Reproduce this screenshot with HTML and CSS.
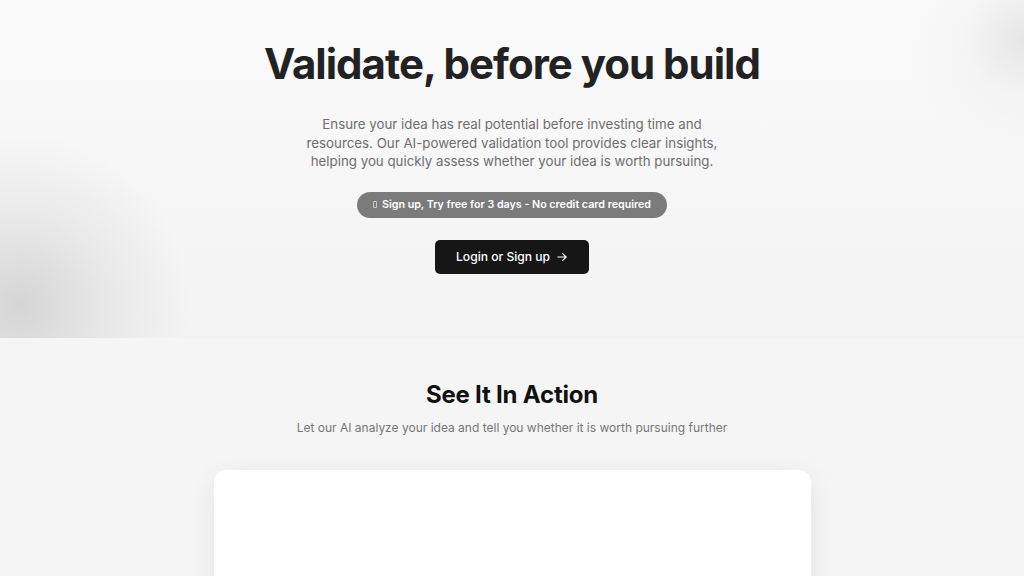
FILE: index.html
```html
<!DOCTYPE html>
<html lang="en">
<head>
<meta charset="utf-8">
<title>Validate, before you build</title>
<link rel="stylesheet" href="styles.css">
</head>
<body>
<section class="hero">
  <h1 class="hero-title">Validate, before you build</h1>
  <p class="hero-text">Ensure your idea has real potential before investing time and resources. Our AI-powered validation tool provides clear insights, helping you quickly assess whether your idea is worth pursuing.</p>
  <div class="badge"><span class="tofu"></span>Sign up, Try free for 3 days - No credit card required</div>
  <a class="cta" href="#">Login or Sign up
    <svg class="arrow" viewBox="0 0 16 16" width="12" height="12" fill="none" stroke="currentColor" stroke-width="1.6" stroke-linecap="round" stroke-linejoin="round"><path d="M2.5 8h11M9 3.5 13.5 8 9 12.5"/></svg>
  </a>
</section>
<section class="action">
  <h2 class="action-title">See It In Action</h2>
  <p class="action-text">Let our AI analyze your idea and tell you whether it is worth pursuing further</p>
  <div class="demo-card"></div>
</section>
</body>
</html>
```

FILE: styles.css
```css
* { box-sizing: border-box; }
html, body { margin: 0; padding: 0; }
body {
  font-family: Inter, "Noto Sans", "Liberation Sans", sans-serif;
  background: #f5f5f5;
  color: #222;
  overflow: hidden;
  height: 576px;
}
.hero {
  height: 338px;
  padding-top: 40px;
  display: flex;
  flex-direction: column;
  align-items: center;
  background:
    radial-gradient(circle at 20px 305px, rgba(205,205,205,0.8) 0, rgba(215,215,215,0.4) 90px, rgba(240,240,240,0) 170px),
    radial-gradient(circle at 100% 40px, rgba(225,225,225,0.8) 0, rgba(235,235,235,0.3) 60px, rgba(245,245,245,0) 120px),
    linear-gradient(#fafafa, #f3f3f3);
}
.hero-title {
  margin: 0;
  font-size: 42px;
  line-height: 48px;
  font-weight: 700;
  letter-spacing: -1px;
  color: #222;
}
.hero-text {
  margin: 27px 0 0;
  width: 420px;
  text-align: center;
  font-size: 13.3px;
  line-height: 18.5px;
  color: #6e6e6e;
}
.badge {
  margin-top: 21px;
  height: 26px;
  padding: 0 16px;
  border-radius: 13px;
  background: #7b7b7b;
  color: #fff;
  font-size: 10.7px;
  font-weight: 600;
  display: flex;
  align-items: center;
  gap: 5px;
}
.tofu {
  width: 4px;
  height: 7px;
  border: 1px solid rgba(255,255,255,0.6);
  border-radius: 1px;
}
.cta {
  margin-top: 22px;
  height: 34px;
  padding: 0 21px 0 21px;
  border-radius: 5px;
  background: #161616;
  color: #fff;
  text-decoration: none;
  font-size: 12.1px;
  font-weight: 500;
  display: flex;
  align-items: center;
  gap: 6px;
}
.arrow { display: block; }
.action {
  padding-top: 42px;
  display: flex;
  flex-direction: column;
  align-items: center;
}
.action-title {
  margin: 0;
  font-size: 24px;
  line-height: 30px;
  font-weight: 700;
  color: #111;
  letter-spacing: -0.2px;
}
.action-text {
  margin: 9px 0 0;
  font-size: 12px;
  line-height: 18px;
  color: #777;
}
.demo-card {
  margin-top: 33px;
  width: 597px;
  height: 300px;
  background: #fff;
  border-radius: 12px;
  box-shadow: 0 8px 28px rgba(0,0,0,0.08);
}
```
